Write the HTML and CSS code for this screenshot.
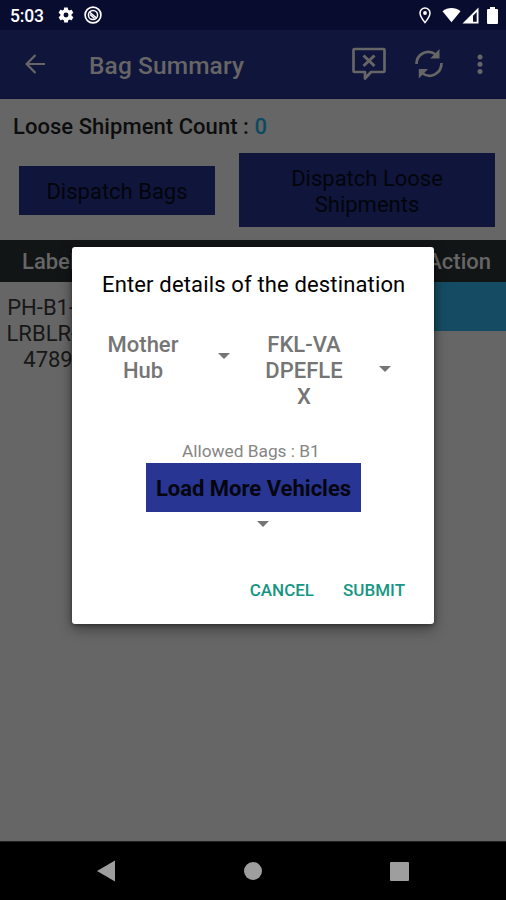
FILE: index.html
```html
<!DOCTYPE html>
<html lang="en">
<head>
<meta charset="utf-8">
<title>Bag Summary</title>
<link rel="stylesheet" href="styles.css">
</head>
<body>
<div class="screen">
  <header class="status">
    <span class="time">5:03</span>
    <svg class="gear" width="18" height="18" viewBox="0 0 24 24"><path fill="#fff" fill-rule="evenodd" d="M19.4 13c.1-.6.1-1.400 0-2l2.100-1.600c.2-.2.200-.4.100-.6l-2-3.500c-.1-.2-.4-.3-.6-.2l-2.500 1c-.5-.4-1.100-.7-1.700-1L14.400 2.400c0-.2-.2-.4-.5-.4h-4c-.200 0-.4.200-.5.400L9.100 5.100c-.6.200-1.200.6-1.700 1l-2.500-1c-.2-.1-.5 0-.6.200l-2 3.500c-.1.200-.1.500.1.600L4.500 11c-.1.600-.1 1.400 0 2l-2.100 1.600c-.2.200-.2.400-.1.600l2 3.500c.1.200.4.300.6.200l2.500-1c.5.400 1.100.7 1.700 1l.4 2.700c0 .2.200.4.500.4h4c.2 0 .4-.2.500-.4l.4-2.700c.6-.2 1.200-.6 1.700-1l2.500 1c.2.100.5 0 .6-.2l2-3.500c.1-.2.1-.5-.1-.6zM12 15.300a3.300 3.300 0 1 1 0-6.600 3.300 3.300 0 0 1 0 6.600z"/></svg>
    <svg class="ring" width="18" height="18" viewBox="0 0 18 18" fill="none" stroke="#fff"><circle cx="9" cy="9" r="7.900" stroke-width="1.700"/><circle cx="9" cy="9" r="4.600" stroke-width="1.500"/><path d="M5.500 6l7 6M6 8.500l4.500 4" stroke-width="1.500"/></svg>
    <svg class="pin" width="12" height="17" viewBox="0 0 12 17"><path d="M6 1a5 5 0 0 0-5 5c0 3.400 5 9.600 5 9.600S11 9.400 11 6a5 5 0 0 0-5-5z" fill="none" stroke="#fff" stroke-width="1.500"/><circle cx="6" cy="6" r="1.900" fill="#fff"/></svg>
    <svg class="wifi" width="19" height="16" viewBox="0 0 20 16"><path d="M.5 4C6-.4 14-.4 19.500 4L10 15.700z" fill="#fff"/></svg>
    <svg class="signal" width="17" height="17" viewBox="0 0 17 17"><path fill="#fff" fill-rule="evenodd" d="M16.500.500v16H.5zM14.700 5v9.700H11V8.700z"/></svg>
    <svg class="battery" width="11" height="17" viewBox="0 0 11 17"><path fill="#fff" d="M3 0h5v2h2q1 0 1 1v13q0 1-1 1H1q-1 0-1-1V3q0-1 1-1h2z"/></svg>
  </header>
  <nav class="appbar">
    <svg class="back" width="20" height="20" viewBox="0 0 20 20" fill="none" stroke="#666" stroke-width="2.200"><path d="M20 10H2M10.500 1L1.600 10l8.900 9"/></svg>
    <h1>Bag Summary</h1>
    <svg class="comment" width="34" height="34" viewBox="0 0 34 34" fill="none" stroke="#666"><path d="M2.500 2h29q1 0 1 1v21q0 1-1 1H19l-6 6.500V25H2.500q-1 0-1-1V3q0-1 1-1z" stroke-width="2.700" stroke-linejoin="round"/><path d="M11.500 8.500l11 10.500M22.500 8.500l-11 10.500" stroke-width="3"/></svg>
    <svg class="sync" width="28" height="30" viewBox="0 0 28 30"><g fill="none" stroke="#666" stroke-width="2.700"><path d="M1.500 15C1.500 5 12-.500 21 5.500M26.500 14C26.500 24.500 15.500 30.500 7 24"/></g><path fill="#666" d="M24.500 0v9.500H15.200zM3.800 29.500V20H13z"/></svg>
    <svg class="dots" width="6" height="21" viewBox="0 0 6 21" fill="#666"><circle cx="3" cy="3" r="2.500"/><circle cx="3" cy="10.200" r="2.500"/><circle cx="3" cy="17.500" r="2.500"/></svg>
  </nav>
  <main>
    <p class="count">Loose Shipment Count : <span>0</span></p>
    <div class="actions">
      <button class="single">Dispatch Bags</button>
      <button class="double">Dispatch Loose<br>Shipments</button>
    </div>
    <div class="thead"><span>Label</span><span>Action</span></div>
    <div class="row">
      <div class="label">PH-B1-B<br>LRBLR-2<br>4789</div>
      <div class="cell"></div>
    </div>
  </main>
  <footer class="navbar">
    <svg width="18" height="22" viewBox="0 0 18 22"><path fill="#9e9e9e" d="M18 .5v21L0 11z"/></svg>
    <svg width="18" height="18" viewBox="0 0 18 18"><circle cx="9" cy="9" r="9" fill="#9e9e9e"/></svg>
    <svg width="19" height="19" viewBox="0 0 19 19"><rect width="19" height="19" rx="1" fill="#9e9e9e"/></svg>
  </footer>
  <section class="dialog">
    <h2>Enter details of the destination</h2>
    <div class="selects">
      <div class="hub">Mother<br>Hub</div>
      <i class="caret first"></i>
      <div class="dest">FKL-VA<br>DPEFLE<br>X</div>
      <i class="caret second"></i>
    </div>
    <p class="allowed">Allowed Bags : B1</p>
    <button class="load">Load More Vehicles</button>
    <i class="caret third"></i>
    <div class="buttons"><span>CANCEL</span><span>SUBMIT</span></div>
  </section>
</div>
</body>
</html>
```
FILE: styles.css
```css
* { box-sizing: border-box; }
body { margin: 0; font-family: Roboto, "Liberation Sans", sans-serif; }
h1, h2, p { margin: 0; }
svg { display: block; flex: none; }
button { border: 0; padding: 0; font: inherit; border-radius: 0; }
.screen { position: relative; width: 506px; height: 900px; display: flex; flex-direction: column; overflow: hidden; background: #666; }
.status { height: 30px; flex: none; background: #080c2f; display: flex; align-items: center; padding: 0 8px 0 10px; }
.time { width: 47px; color: #fff; font-size: 17.5px; line-height: 30px; font-weight: 500; padding-top: 2px; letter-spacing: -.2px; }
.ring { margin-left: 9px; }
.pin { margin-left: auto; }
.wifi { margin-left: 11px; }
.signal { margin-left: 1px; }
.battery { margin-left: 8px; }
.appbar { height: 69px; flex: none; background: #10153b; display: flex; align-items: center; padding: 0 23px 0 25px; border-bottom: 1px solid #0b0f33; }
.appbar h1 { margin-left: 44px; font-size: 24.5px; font-weight: 500; letter-spacing: .1px; color: #666; padding-top: 2px; white-space: nowrap; }
.comment { margin-left: auto; }
.sync { margin-left: 29px; }
.dots { margin-left: 34px; }
main { flex: 1; }
.count { height: 54px; padding: 14px 0 0 13px; font-size: 22px; line-height: 28px; font-weight: 500; letter-spacing: .05px; color: #0d0d0d; white-space: nowrap; }
.count span { color: #0c4a61; }
.actions { height: 87px; display: flex; align-items: flex-start; padding-left: 19px; }
.actions button { background: #10153b; color: #03050b; font-size: 22px; line-height: 26px; }
.actions .single { width: 196px; height: 49px; margin-top: 13px; padding-top: 2px; }
.actions .double { width: 256px; height: 74px; margin-left: 24px; padding-top: 3px; }
.thead { height: 42px; background: #121516; color: #666; font-size: 22px; line-height: 44px; font-weight: 500; display: flex; justify-content: space-between; padding: 0 15px 0 22px; }
.row { display: flex; justify-content: space-between; }
.label { width: 96px; padding-top: 13px; font-size: 22px; line-height: 26px; text-align: center; color: #171717; }
.cell { width: 100px; height: 49px; background: #154c63; }
.navbar { height: 59px; flex: none; background: #000; display: flex; align-items: center; justify-content: space-between; padding: 0 97px; border-top: 1px solid #222; }
.dialog { position: absolute; left: 72px; top: 247px; width: 362px; height: 377px; background: #fff; border-radius: 3px; box-shadow: 0 5px 14px rgba(0,0,0,.4), 0 1px 4px rgba(0,0,0,.4); display: flex; flex-direction: column; }
.dialog h2 { height: 84px; padding: 24px 0 0 30px; font-size: 22px; line-height: 28px; font-weight: 400; letter-spacing: .15px; color: #000; white-space: nowrap; }
.selects { display: flex; height: 108px; font-size: 22px; line-height: 26px; font-weight: 500; color: #757575; text-align: center; }
.hub, .dest { padding-top: 1px; }
.hub { width: 80px; margin-left: 31px; }
.dest { width: 84px; margin-left: 32px; }
.caret { display: block; width: 12px; height: 6px; background: #757575; clip-path: polygon(0 0, 100% 0, 50% 100%); }
.first { margin: 22px 0 0 35px; }
.second { margin: 35px 0 0 33px; }
.third { margin: 9px 0 0 185px; }
.allowed { height: 24px; padding-left: 110px; font-size: 17.3px; line-height: 25px; color: #858585; white-space: nowrap; }
.load { width: 215px; height: 49px; margin-left: 74px; background: #283593; color: #05060e; font-size: 22px; font-weight: 700; white-space: nowrap; padding-top: 2px; }
.buttons { margin-top: 51px; display: flex; justify-content: flex-end; gap: 29px; padding-right: 29px; font-size: 17px; line-height: 24px; font-weight: 500; color: #159684; }
```
